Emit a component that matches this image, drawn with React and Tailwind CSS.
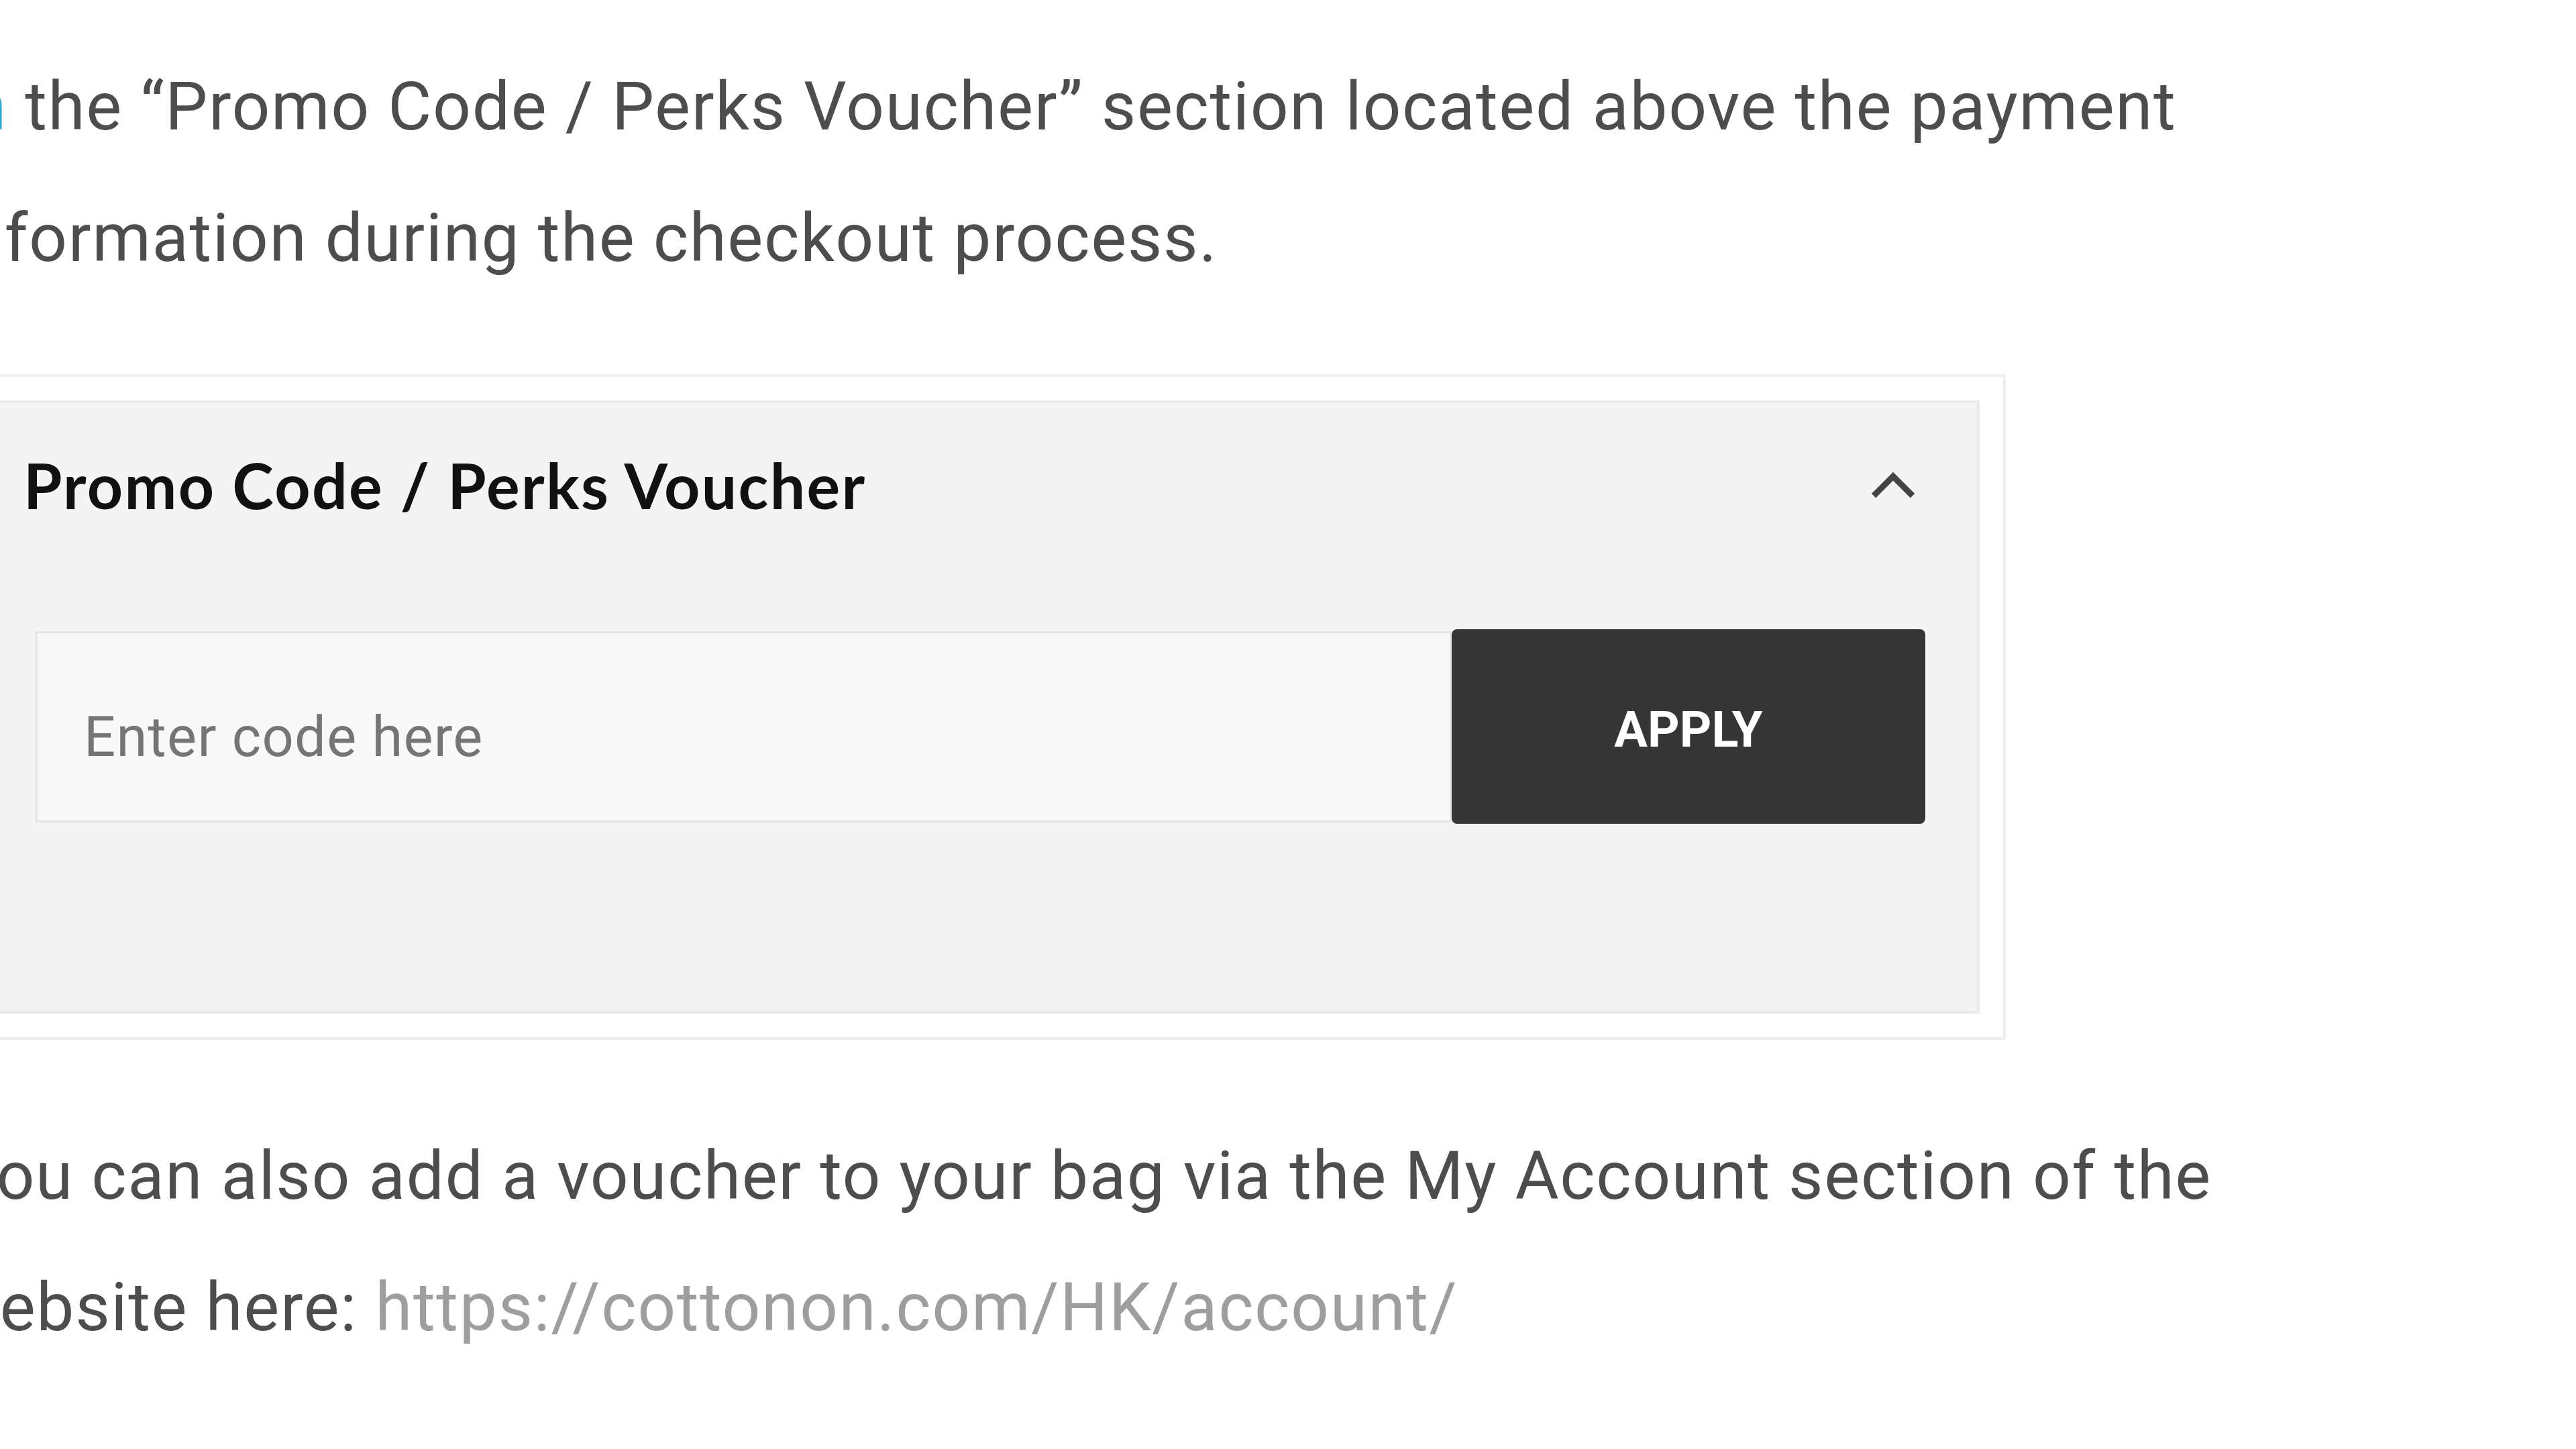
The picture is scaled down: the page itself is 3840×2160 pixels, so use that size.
import React from 'react';

const ChevronUp = () => (
  <svg width="66" height="40" viewBox="0 0 66 40" fill="none" className="shrink-0">
    <path d="M4 36 L33 7 L62 36" stroke="#444" strokeWidth="9" strokeLinejoin="miter" />
  </svg>
);

export default function App() {
  return (
    <div className="w-[3840px] h-[2160px] overflow-hidden bg-white font-['Roboto',sans-serif] text-[100px] leading-[196px] tracking-[1.6px] text-[#4d4d4d]">
      <div className="pt-[61px]">
        {/* intro paragraph */}
        <p className="whitespace-nowrap">
          <span className="ml-[-46px] text-[#2aa6da]">n</span> the “Promo Code / Perks Voucher” section located above the payment
        </p>
        <p className="whitespace-nowrap ml-[-76px]">information during the checkout process.</p>

        {/* promo code panel */}
        <div className="mt-[105px] ml-[-100px] w-[3090px] border-4 border-[#efefef] bg-white p-[35px] tracking-normal">
          <div className="border-4 border-[#ebebeb] bg-[#f4f4f4] pt-[66px] pb-[279px]">
            <div className="flex items-center justify-between pl-[92px] pr-[92px]">
              <h3 className="font-['Lato',sans-serif] font-bold text-[93px] leading-[112px] tracking-[2.3px] text-[#111]">
                Promo Code / Perks Voucher
              </h3>
              <ChevronUp />
            </div>
            <div className="mt-[159px] flex items-center pl-[110px] pr-[77px]">
              <input
                type="text"
                placeholder="Enter code here"
                className="flex-1 min-w-0 h-[285px] border-[3px] border-[#e6e6e6] bg-[#f9f9f9] pl-[69px] pt-[30px] text-[83px] tracking-[1.3px] text-[#333] placeholder:text-[#757575] outline-none"
              />
              <button className="w-[706px] h-[290px] shrink-0 rounded-[8px] bg-[#343534] pt-[10px] text-white font-bold text-[74px] leading-none">
                APPLY
              </button>
            </div>
          </div>
        </div>

        {/* follow-up paragraph */}
        <div className="mt-[105px]">
          <p className="whitespace-nowrap ml-[-64px]">You can also add a voucher to your bag via the My Account section of the</p>
          <p className="whitespace-nowrap ml-[-77px]">
            website here: <a href="#" className="text-[#9e9e9e]">https://cottonon.com/HK/account/</a>
          </p>
        </div>
      </div>
    </div>
  );
}
